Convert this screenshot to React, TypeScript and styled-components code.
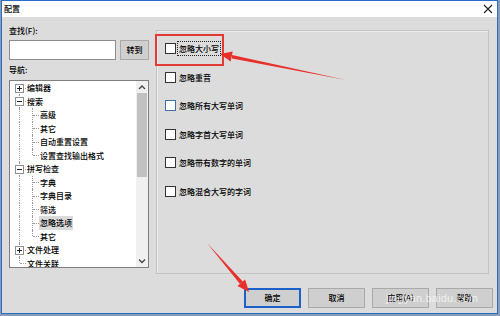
import React from 'react'
import styled, { createGlobalStyle, css } from 'styled-components'

const GlobalStyle = createGlobalStyle`
  html, body {
    margin: 0;
    padding: 0;
    width: 500px;
    height: 316px;
    overflow: hidden;
    background: #8a9bb3;
    font-family: "Noto Sans CJK SC", "Noto Sans", sans-serif;
  }
  * { box-sizing: border-box; }
`

const Window = styled.div`
  position: relative;
  margin-left: 1px;
  width: 497px;
  height: 314px;
  border: 1px solid #2b6cc6;
  background: #dcdcdc;
  display: flex;
  flex-direction: column;
  font-size: 8px;
  font-weight: 500;
  color: #000;
`

const TitleBar = styled.div`
  height: 16px;
  background: #fff;
  display: flex;
  align-items: center;
  justify-content: space-between;
  padding: 0 4px 0 2px;
`

const Title = styled.span`
  font-size: 8px;
  line-height: 16px;
`

const Main = styled.div`
  display: flex;
  align-items: flex-start;
  gap: 7px;
  padding: 8px 0 0 7px;
`

const LeftCol = styled.div`
  width: 140px;
  display: flex;
  flex-direction: column;
`

const FieldLabel = styled.div<{ $top?: number }>`
  line-height: 12px;
  margin-top: ${(p) => p.$top ?? 0}px;
  margin-bottom: 3px;
`

const SearchRow = styled.div`
  display: flex;
  gap: 4px;
`

const SearchInput = styled.div`
  width: 107px;
  height: 20px;
  background: #fff;
  border: 1px solid #8c8c8c;
`

const Button = styled.div<{ $default?: boolean; $w?: number }>`
  width: ${(p) => p.$w ?? 57}px;
  height: 20px;
  display: flex;
  align-items: center;
  justify-content: center;
  background: #cfcfcf;
  border: 1px solid #a9a9a9;
  line-height: 1;
  ${(p) =>
    p.$default &&
    css`
      border: 2px solid #1b61c9;
    `}
`

const Tree = styled.div`
  margin-top: 1px;
  width: 140px;
  height: 188px;
  border: 1px solid #7e7e7e;
  background: #fff;
  display: flex;
`

const TreeList = styled.div`
  flex: 1;
  padding-left: 3px;
  overflow: hidden;
`

const Row = styled.div`
  display: flex;
  align-items: stretch;
  height: 13.5px;
`

type CellKind = 'pipe' | 'tee' | 'ell' | 'first' | 'mid' | 'none'

const guide = '1px dotted #9a9a9a'

const Cell = styled.span<{ $kind: CellKind }>`
  position: relative;
  width: 13px;
  flex: none;
  &::before {
    content: '';
    position: absolute;
    left: 6px;
    border-left: ${guide};
    top: ${(p) => (p.$kind === 'first' ? '50%' : '0')};
    bottom: ${(p) => (p.$kind === 'ell' ? '50%' : '0')};
    display: ${(p) => (p.$kind === 'none' ? 'none' : 'block')};
  }
  &::after {
    content: '';
    position: absolute;
    left: 7px;
    right: 0;
    top: 50%;
    border-top: ${guide};
    display: ${(p) => (p.$kind === 'pipe' || p.$kind === 'none' ? 'none' : 'block')};
  }
`

const Expander = styled.span`
  position: absolute;
  z-index: 1;
  left: 2px;
  top: 50%;
  margin-top: -4px;
  width: 9px;
  height: 9px;
  border: 1px solid #8e8e8e;
  background: #fff;
  display: flex;
  align-items: center;
  justify-content: center;
  svg { display: block; }
`

const NodeText = styled.span<{ $selected?: boolean }>`
  line-height: 13.5px;
  padding: 0 1px;
  white-space: nowrap;
  background: ${(p) => (p.$selected ? '#dadada' : 'transparent')};
`

const Scrollbar = styled.div`
  width: 12px;
  background: #f0f0f0;
  display: flex;
  flex-direction: column;
  align-items: center;
`

const ScrollArrow = styled.div`
  height: 12px;
  width: 12px;
  display: flex;
  align-items: center;
  justify-content: center;
`

const Thumb = styled.div`
  width: 10px;
  height: 84px;
  background: #c1c1c1;
`

const Track = styled.div`
  flex: 1;
`

const Panel = styled.div`
  margin-top: 5px;
  width: 333px;
  height: 244px;
  border: 1px solid #c3c3c3;
  box-shadow: inset 1px 1px 0 #ececec;
  padding: 11px 0 0 8px;
  display: flex;
  flex-direction: column;
  gap: 15.6px;
`

const CheckRow = styled.div`
  display: flex;
  align-items: center;
  gap: 1px;
  height: 13px;
`

const Box = styled.span<{ $hover?: boolean }>`
  width: 11px;
  height: 11px;
  background: #fff;
  border: 1px solid ${(p) => (p.$hover ? '#3f6fa8' : '#333')};
`

const CheckText = styled.span<{ $focus?: boolean }>`
  line-height: 11px;
  padding: 1px;
  border: 1px dotted ${(p) => (p.$focus ? '#222' : 'transparent')};
`

const Footer = styled.div`
  display: flex;
  justify-content: flex-end;
  gap: 7px;
  margin-top: 14px;
  padding-right: 4px;
`

const Highlight = styled.div`
  position: absolute;
  left: 153px;
  top: 33px;
  width: 69px;
  height: 32px;
  border: 2px solid #e23b36;
`

const Overlay = styled.svg`
  position: absolute;
  left: -1px;
  top: -1px;
  pointer-events: none;
`

const Watermark = styled.div`
  position: absolute;
  left: 384px;
  top: 291px;
  font-family: "Liberation Sans", Arial, sans-serif;
  font-size: 11px;
  font-weight: 400;
  color: rgba(255, 255, 255, 0.7);
  letter-spacing: 0.2px;
`

type Node = {
  text: string
  cells: CellKind[]
  expander?: '+' | '-'
  selected?: boolean
}

const nodes: Node[] = [
  { text: '编辑器', cells: ['first'], expander: '+' },
  { text: '搜索', cells: ['mid'], expander: '-' },
  { text: '高级', cells: ['pipe', 'tee'] },
  { text: '其它', cells: ['pipe', 'tee'] },
  { text: '自动重置设置', cells: ['pipe', 'tee'] },
  { text: '设置查找输出格式', cells: ['pipe', 'ell'] },
  { text: '拼写检查', cells: ['mid'], expander: '-' },
  { text: '字典', cells: ['pipe', 'tee'] },
  { text: '字典目录', cells: ['pipe', 'tee'] },
  { text: '筛选', cells: ['pipe', 'tee'] },
  { text: '忽略选项', cells: ['pipe', 'tee'], selected: true },
  { text: '其它', cells: ['pipe', 'ell'] },
  { text: '文件处理', cells: ['mid'], expander: '+' },
  { text: '文件关联', cells: ['ell'] },
]

const options = [
  '忽略大小写',
  '忽略重音',
  '忽略所有大写单词',
  '忽略字首大写单词',
  '忽略带有数字的单词',
  '忽略混合大写的字词',
]

function Sign({ plus }: { plus: boolean }) {
  return (
    <svg width="7" height="7" viewBox="0 0 7 7">
      <path d="M1 3.5h5" stroke="#222" strokeWidth="1" />
      {plus && <path d="M3.5 1v5" stroke="#222" strokeWidth="1" />}
    </svg>
  )
}

function Chevron({ up }: { up: boolean }) {
  return (
    <svg width="8" height="6" viewBox="0 0 8 6">
      <path
        d={up ? 'M1 5l3-3 3 3' : 'M1 1.5l3 3 3-3'}
        fill="none"
        stroke="#444"
        strokeWidth="1.3"
      />
    </svg>
  )
}

function CloseIcon() {
  return (
    <svg width="10" height="10" viewBox="0 0 10 10">
      <path d="M1 1l8 8M9 1l-8 8" stroke="#222" strokeWidth="1.1" />
    </svg>
  )
}

export default function App() {
  return (
    <>
      <GlobalStyle />
      <Window>
        <TitleBar>
          <Title>配置</Title>
          <CloseIcon />
        </TitleBar>
        <Main>
          <LeftCol>
            <FieldLabel>查找(F):</FieldLabel>
            <SearchRow>
              <SearchInput />
              <Button $w={29}>转到</Button>
            </SearchRow>
            <FieldLabel $top={4}>导航:</FieldLabel>
            <Tree>
              <TreeList>
                {nodes.map((n, i) => (
                  <Row key={i}>
                    {n.cells.map((c, j) => (
                      <Cell key={j} $kind={c}>
                        {j === 0 && n.expander && (
                          <Expander>
                            <Sign plus={n.expander === '+'} />
                          </Expander>
                        )}
                      </Cell>
                    ))}
                    <NodeText $selected={n.selected}>{n.text}</NodeText>
                  </Row>
                ))}
              </TreeList>
              <Scrollbar>
                <ScrollArrow>
                  <Chevron up />
                </ScrollArrow>
                <Thumb />
                <Track />
                <ScrollArrow>
                  <Chevron up={false} />
                </ScrollArrow>
              </Scrollbar>
            </Tree>
          </LeftCol>
          <Panel>
            {options.map((o, i) => (
              <CheckRow key={o}>
                <Box $hover={i === 2} />
                <CheckText $focus={i === 0}>{o}</CheckText>
              </CheckRow>
            ))}
          </Panel>
        </Main>
        <Footer>
          <Button $default>确定</Button>
          <Button>取消</Button>
          <Button>应用(A)</Button>
          <Button>帮助</Button>
        </Footer>

        <Highlight />
        <Overlay width="500" height="316" viewBox="0 0 500 316">
          <polygon points="345,80 231,55 231,58.5" fill="#e8302b" />
          <polygon points="219,54 229.7,61.4 231.7,51.6" fill="#e8302b" />
          <polygon points="206,243 241.8,281.6 239,284" fill="#e8302b" />
          <polygon points="248,292 244.1,279.6 236.5,286" fill="#e8302b" />
        </Overlay>
        <Watermark>jingyan.baidu.com</Watermark>
      </Window>
    </>
  )
}
